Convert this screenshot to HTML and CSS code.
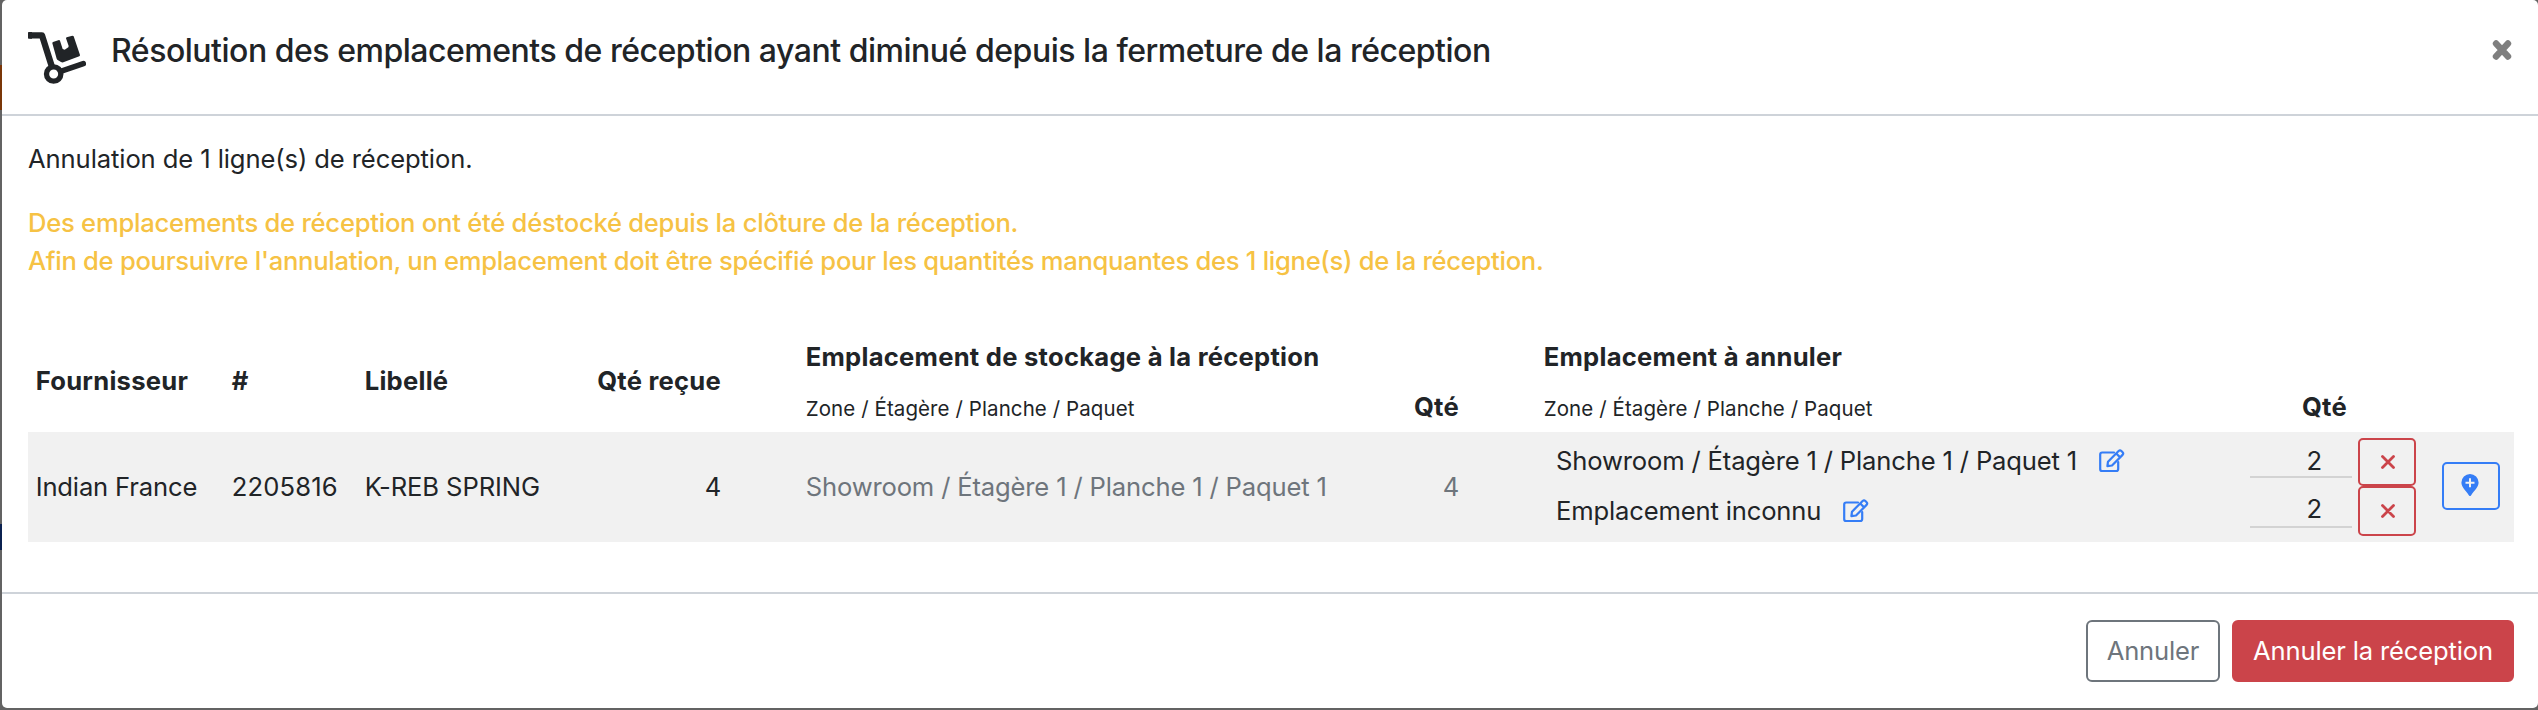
FILE: index.html
```html
<!DOCTYPE html>
<html lang="fr">
<head>
<meta charset="utf-8">
<title>Annulation de réception</title>
<link rel="stylesheet" href="styles.css">
</head>
<body>
<main class="modal">
  <header class="modal-header">
    <svg class="icon-dolly" viewBox="84 96 174 156" aria-hidden="true">
      <path d="M92 106H126L155 198" fill="none" stroke="#212427" stroke-width="19" stroke-linecap="round" stroke-linejoin="round"/>
      <path d="M84 98q0-2 2-2h10v20h-10q-2 0-2-2z" fill="#212427"/>
      <path d="M182 214L250 191" fill="none" stroke="#212427" stroke-width="17" stroke-linecap="round"/>
      <circle cx="161" cy="222" r="21.5" fill="none" stroke="#212427" stroke-width="16"/>
      <path d="M159 126L177 120Q179 120 180 122L188 147L194 149L205 142L206 138L198 115Q198 113 200 112L217 107Q220 107 221 109L240 165Q240 168 238 169L190 187Q186 188 183 186L173 180Q171 179 170 176L157 130Q157 127 159 126Z" fill="#212427"/>
    </svg>
    <h1 class="modal-title">Résolution des emplacements de réception ayant diminué depuis la fermeture de la réception</h1>
    <svg class="icon-close" viewBox="0 0 20 22" aria-label="Fermer"><path d="M4 4.5L16 17.5M16 4.5L4 17.5" stroke="#7f7f7f" stroke-width="6.4" stroke-linecap="round"/></svg>
  </header>

  <section class="modal-body">
    <p class="intro">Annulation de 1 ligne(s) de réception.</p>
    <div class="warning">
      <p class="warning-first">Des emplacements de réception ont été déstocké depuis la clôture de la réception.</p>
      <p class="warning-second">Afin de poursuivre l'annulation, un emplacement doit être spécifié pour les quantités manquantes des 1 ligne(s) de la réception.</p>
    </div>

    <div class="lines">
      <div class="row head">
        <div class="cell tall">Fournisseur</div>
        <div class="cell tall">#</div>
        <div class="cell tall">Libellé</div>
        <div class="cell tall qty">Qté reçue</div>
        <div class="group">
          <div class="cell">Emplacement de stockage à la réception</div>
          <div class="cell sub"><small>Zone / Étagère / Planche / Paquet</small><span>Qté</span></div>
        </div>
        <div class="group cancel-head">
          <div class="cell">Emplacement à annuler</div>
          <div class="cell sub"><small>Zone / Étagère / Planche / Paquet</small><span>Qté</span></div>
        </div>
      </div>

      <div class="row item">
        <div class="cell">Indian France</div>
        <div class="cell ref">2205816</div>
        <div class="cell label">K-REB SPRING</div>
        <div class="cell qty">4</div>
        <div class="cell stored"><span>Showroom / Étagère 1 / Planche 1 / Paquet 1</span><span>4</span></div>
        <div class="cancel">
          <div class="places">
            <div class="place">
              <div class="place-name"><span>Showroom / Étagère 1 / Planche 1 / Paquet 1</span>
                <svg class="icon-edit" viewBox="0 0 26 24"><path d="M15 3.5H3.2Q1.2 3.5 1.2 5.5V20.2Q1.2 22 3.2 22H17.2Q19.2 22 19.2 20V13" /><path d="M9 12.7L19.6 2Q21 .8 22.4 2L23.6 3.2Q24.8 4.5 23.6 5.9L13 16.5L8.4 17.2ZM17.2 4.5L21.2 8.4"/></svg>
              </div>
              <div class="amount">2</div>
              <button class="btn-square danger"><svg class="icon-x" viewBox="0 0 14 14"><path d="M1.5 1.5l11 11M12.5 1.5l-11 11"/></svg></button>
            </div>
            <div class="place last">
              <div class="place-name"><span>Emplacement inconnu</span>
                <svg class="icon-edit" viewBox="0 0 26 24"><path d="M15 3.5H3.2Q1.2 3.5 1.2 5.5V20.2Q1.2 22 3.2 22H17.2Q19.2 22 19.2 20V13" /><path d="M9 12.7L19.6 2Q21 .8 22.4 2L23.6 3.2Q24.8 4.5 23.6 5.9L13 16.5L8.4 17.2ZM17.2 4.5L21.2 8.4"/></svg>
              </div>
              <div class="amount">2</div>
              <button class="btn-square danger"><svg class="icon-x" viewBox="0 0 14 14"><path d="M1.5 1.5l11 11M12.5 1.5l-11 11"/></svg></button>
            </div>
          </div>
          <button class="btn-square primary"><svg class="icon-pin" viewBox="0 0 18 22"><path d="M9 0A8.6 8.6 0 0 0 .4 8.6C.4 12.6 4 16 8 21.4Q9 22.4 10 21.4C14 16 17.6 12.6 17.6 8.6A8.6 8.6 0 0 0 9 0Z" fill="#357df6"/><path d="M9 4.2v9M4.5 8.7h9" stroke="#f1f1f1" stroke-width="2"/></svg></button>
        </div>
      </div>
    </div>
  </section>

  <footer class="modal-footer">
    <button class="btn outline">Annuler</button>
    <button class="btn solid">Annuler la réception</button>
  </footer>
</main>
</body>
</html>
```

FILE: styles.css
```css
* { box-sizing: border-box; }

body {
  margin: 0;
  height: 710px;
  padding: 0 0 2px 2px;
  overflow: hidden;
  background: linear-gradient(#636363 65px, #7a3608 65px, #7a3608 110px, #636363 110px, #636363 524px, #0b2150 524px, #0b2150 550px, #636363 550px);
  font: 400 25.6px/38px Inter, "Liberation Sans", sans-serif;
  letter-spacing: -0.16px;
  color: #212427;
}

p, h1 { margin: 0; }

button {
  margin: 0;
  font: inherit;
  letter-spacing: inherit;
  background: transparent;
}

.modal {
  display: flex;
  flex-direction: column;
  height: 708px;
  background: #fff;
  border-radius: 5px;
}

.modal-header {
  display: flex;
  align-items: flex-start;
  height: 116px;
  padding: 32px 26px 0;
  border-bottom: 2px solid #ced3d9;
}

.icon-dolly { width: 58px; height: 52px; }

.modal-title {
  flex: 1;
  margin-left: 25px;
  font-size: 32px;
  line-height: 38px;
  font-weight: 500;
  letter-spacing: -0.48px;
}

.icon-close { width: 20px; height: 22px; margin-top: 7px; }

.modal-body {
  height: 476px;
  padding: 24px 24px 0 26px;
}

.intro { margin: 0 0 26px; letter-spacing: -0.1px; }

.warning {
  color: #f6c244;
  font-weight: 500;
}

.warning-first { letter-spacing: -0.25px; }
.warning-second { letter-spacing: -0.29px; }

.lines { margin-top: 52px; }

.row {
  display: grid;
  grid-template-columns: 196px 133px 215px 226px 738px 1fr;
}

.head {
  height: 100px;
  font-weight: 700;
  letter-spacing: 0.25px;
}

.cell {
  display: flex;
  align-items: center;
  padding: 0 7.7px;
  white-space: nowrap;
}

.tall { padding-bottom: 2px; }

.cell.qty { justify-content: flex-end; padding-right: 77px; }

.group {
  display: grid;
  grid-template-rows: 50px 50px;
}

.sub {
  align-items: baseline;
  justify-content: space-between;
  padding-top: 6px;
  padding-right: 77px;
}

.sub small {
  font-size: 20.5px;
  font-weight: 400;
  letter-spacing: 0.09px;
}

.cancel-head .sub { padding-right: 167px; }

.item {
  height: 110px;
  background: #f1f1f1;
}

.ref { letter-spacing: 0.15px; }
.label { letter-spacing: -0.1px; }

.stored {
  justify-content: space-between;
  padding-right: 77px;
  color: #6e757c;
}

.cancel {
  display: flex;
  align-items: center;
  justify-content: space-between;
  padding: 0 14px 0 20px;
}

.places { width: 860px; }

.place {
  display: grid;
  grid-template-columns: 694px 102px 58px;
  height: 48px;
}

.place.last { height: 50px; }

.place .btn-square { margin-left: 6px; height: 100%; }

.place-name {
  display: flex;
  align-items: center;
  gap: 22px;
  height: 46px;
}

.last .place-name { height: 50px; }

.amount {
  height: 40px;
  padding: 4px 30px 0 0;
  line-height: 38px;
  text-align: right;
  border-bottom: 2px solid #d3d3d3;
}

.last .amount { height: 42px; }

.btn-square {
  display: flex;
  align-items: center;
  justify-content: center;
  width: 58px;
  height: 48px;
  padding: 0 0 0 2px;
  border: 2px solid;
  border-radius: 5px;
}

.danger { border-color: #cb444a; }

.primary {
  margin-bottom: 2px;
  padding: 0 2px 0 0;
  border-color: #357df6;
}

.icon-edit {
  width: 26px;
  height: 24px;
  fill: none;
  stroke: #357df6;
  stroke-width: 2.2;
  stroke-linejoin: round;
  stroke-linecap: round;
}

.icon-x {
  width: 14px;
  height: 14px;
  stroke: #cb444a;
  stroke-width: 2.8;
  stroke-linecap: round;
}

.icon-pin { width: 18px; height: 22px; margin-top: -2px; }

.modal-footer {
  display: flex;
  justify-content: flex-end;
  gap: 12px;
  height: 116px;
  padding: 26px 24px 0 0;
  border-top: 2px solid #ced3d9;
}

.btn {
  height: 62px;
  padding: 0;
  border: 2px solid;
  border-radius: 6px;
}

.outline { width: 134px; color: #6e757c; }

.solid {
  width: 282px;
  border-color: #cb444a;
  background: #cb444a;
  color: #fff;
}
```
